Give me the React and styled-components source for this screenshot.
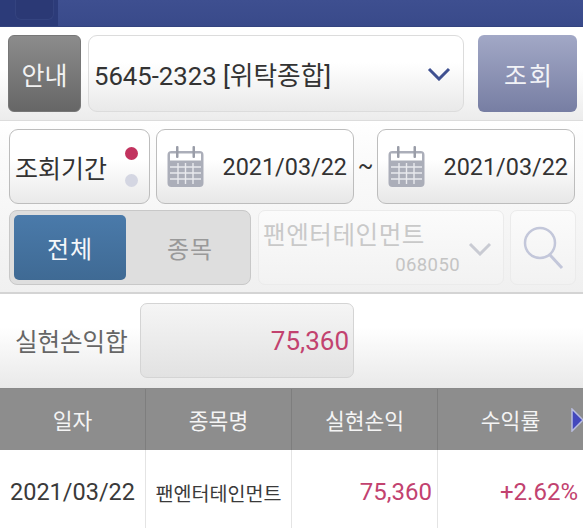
import React from "react";
import styled, { createGlobalStyle } from "styled-components";

const Global = createGlobalStyle`
  html, body { margin: 0; padding: 0; background: #fff; }
  body { font-family: Roboto, "Noto Sans CJK KR", sans-serif; }
  * { box-sizing: border-box; }
`;
const Page = styled.div`
  width: 583px; height: 528px; overflow: hidden; display: flex; flex-direction: column;
  font-family: Roboto, "Noto Sans CJK KR", sans-serif;
`;
const TopBar = styled.div`
  height: 27px; flex: none; display: flex; background: linear-gradient(#3e4f90, #394a8a);
  border-bottom: 1px solid #34447f;
`;
const BackTab = styled.div`
  width: 58px; background: #2c3b79; padding-left: 15px;
`;
const BackShape = styled.div`
  width: 39px; height: 20px; background: #2b3975; border: 1px solid #34437f; border-top: 0;
  border-radius: 0 0 6px 6px;
`;
const AccountRow = styled.div`
  height: 94px; flex: none; display: flex; align-items: flex-start; padding: 8px 6px 0 8px;
  background: linear-gradient(#fff 45%, #ececec);
  border-bottom: 1px solid #dcdcdc;
`;
const GuideButton = styled.div`
  width: 73px; height: 77px; border-radius: 6px; display: flex; align-items: center; justify-content: center;
  color: #f2f2f2; font-size: 25px; background: linear-gradient(#8c8c8c, #666); border: 1px solid #777;
`;
const AccountSelect = styled.div`
  width: 376px; height: 77px; margin-left: 7px; border-radius: 9px; display: flex; align-items: center;
  justify-content: space-between; padding: 0 12px 0 5px; border: 1px solid #dcdcdc;
  background: linear-gradient(#fff 35%, #e9e9e9); color: #333; font-size: 25.7px;
`;
const QueryButton = styled.div`
  width: 99px; height: 77px; margin-left: 14px; border-radius: 6px; display: flex; align-items: center;
  justify-content: center; color: #f2f3f7; font-size: 25px; letter-spacing: 2px; padding-left: 3px;
  background: linear-gradient(#a2a8c6, #777ea3);
`;
const Filters = styled.div`
  height: 173px; flex: none; padding: 8px 7px 0 9px; display: flex; flex-direction: column; gap: 6px;
  background: linear-gradient(#fff, #fbfbfb 20%, #f0f0f0);
  border-bottom: 2px solid #d4d4d4;
`;
const FilterRow = styled.div`
  display: flex; height: ${p => p.$h}px; flex: none;
`;
const PeriodBox = styled.div`
  width: 141px; border-radius: 9px; border: 1px solid #bdbdbd; display: flex; align-items: center;
  justify-content: space-between; padding: 0 11px 0 5px; font-size: 25px; color: #333;
  background: linear-gradient(#fff 40%, #e9e9e9);
`;
const Dots = styled.div`
  display: flex; flex-direction: column; gap: 14px;
`;
const Dot = styled.span`
  width: 13px; height: 13px; border-radius: 50%; background: ${p => p.$c};
`;
const DateBox = styled.div`
  width: 198px; margin-left: ${p => p.$first ? 6 : 0}px; border-radius: 9px; border: 1px solid #bdbdbd;
  display: flex; align-items: center; justify-content: space-between; padding: 0 6px 0 10px;
  font-size: 23.4px; color: #333; background: linear-gradient(#fff 40%, #e7e7e7);
`;
const Tilde = styled.div`
  width: 23px; display: flex; align-items: center; justify-content: center; font-size: 23px; color: #333;
`;
const Toggle = styled.div`
  width: 242px; border-radius: 8px; border: 1px solid #c8c8c8; background: #dedede;
  display: flex; padding: 4px; 
`;
const ToggleActive = styled.div`
  width: 112px; border-radius: 5px; display: flex; align-items: center; justify-content: center;
  color: #f5f7fa; font-size: 24px; letter-spacing: 1px;
  background: linear-gradient(#4a7aaa, #3f6a94);
`;
const ToggleOff = styled.div`
  flex: 1; display: flex; align-items: center; justify-content: center; color: #999; font-size: 24px;
  letter-spacing: 1px; padding-left: 8px;
`;
const StockSelect = styled.div`
  width: 246px; margin-left: 7px; border-radius: 7px; border: 1px solid #ebebeb; position: relative;
  background: linear-gradient(#fbfbfb, #f2f2f2); display: flex; flex-direction: column; padding: 6px 12px 0 4px;
`;
const StockName = styled.div`
  font-size: 24.5px; line-height: 38px; color: #c9c9c9; letter-spacing: .6px; white-space: nowrap;
`;
const StockCode = styled.div`
  font-size: 18.5px; line-height: 21px; color: #c4c4c4; text-align: right; padding-right: 31px; letter-spacing: .4px;
`;
const FadedChevron = styled.svg`
  position: absolute; right: 11px; top: 31px;
`;
const SearchBox = styled.div`
  width: 66px; margin-left: 6px; border-radius: 7px; border: 1px solid #ebebeb;
  background: linear-gradient(#fbfbfb, #f2f2f2); display: flex; align-items: center; justify-content: center;
`;
const SumRow = styled.div`
  height: 95px; flex: none; display: flex; align-items: flex-start; padding: 9px 0 0 15px;
  background: linear-gradient(#fff 35%, #e9e9e9); border-bottom: 1px solid #8a8a8a;
`;
const SumLabel = styled.div`
  width: 125px; height: 75px; display: flex; align-items: center; font-size: 24.5px; color: #666;
`;
const SumValue = styled.div`
  width: 214px; height: 75px; border-radius: 7px; border: 1px solid #d4d4d4; display: flex; align-items: center;
  justify-content: flex-end; padding-right: 4px; font-size: 26px; color: #c2426f;
  background: linear-gradient(#f5f5f5, #e2e2e2);
`;
const Grid = styled.div`
  display: grid; grid-template-columns: 146px 146px 146px 145px; height: ${p => p.$h}px; flex: none;
`;
const HeadCell = styled.div`
  background: #8d8d8d; color: #f4f4f4; font-size: 21.5px; display: flex; align-items: center; justify-content: center;
  border-right: 1px solid #7e7e7e; position: relative; padding-bottom: 1px;
  &:last-child { border-right: 0; }
`;
const Arrow = styled.svg`
  position: absolute; right: 0; top: 19px;
`;
const Cell = styled.div`
  display: flex; align-items: center; justify-content: ${p => p.$align || "center"}; color: ${p => p.$c || "#3a3a3a"};
  font-size: ${p => p.$fs || 23.5}px; padding: 6px ${p => p.$pr || 0}px 0 0; border-right: 1px solid #e4e4e4; background: #fff;
  white-space: nowrap;
  &:last-child { border-right: 0; }
`;

const Calendar = () => (
  <svg width="37" height="41" viewBox="0 0 37 41">
    <rect x="0.5" y="5" width="36" height="36" rx="4" fill="#abaeb9" />
    <rect x="3" y="7.5" width="31" height="7" fill="#fff" />
    <rect x="9" y="0" width="2.5" height="12" rx="1" fill="#9a9da8" />
    <rect x="25.5" y="0" width="2.5" height="12" rx="1" fill="#9a9da8" />
    <g stroke="#e9eaee" strokeWidth="1.4">
      <path d="M3 21h31M3 27h31M3 33h31M11 17v21M18.5 17v21M26 17v21" />
    </g>
  </svg>
);

export default function App() {
  return (
    <Page>
      <Global />
      <TopBar><BackTab><BackShape /></BackTab></TopBar>
      <AccountRow>
        <GuideButton>안내</GuideButton>
        <AccountSelect>
          <span>5645-2323 [위탁종합]</span>
          <svg width="24" height="14" viewBox="0 0 24 14">
            <path d="M2 2l10 10L22 2" fill="none" stroke="#3f5090" strokeWidth="3" />
          </svg>
        </AccountSelect>
        <QueryButton>조회</QueryButton>
      </AccountRow>
      <Filters>
        <FilterRow $h={75}>
          <PeriodBox>
            <span>조회기간</span>
            <Dots><Dot $c="#c2335f" /><Dot $c="#d4d6e2" /></Dots>
          </PeriodBox>
          <DateBox $first><Calendar /><span>2021/03/22</span></DateBox>
          <Tilde>~</Tilde>
          <DateBox><Calendar /><span>2021/03/22</span></DateBox>
        </FilterRow>
        <FilterRow $h={75}>
          <Toggle>
            <ToggleActive>전체</ToggleActive>
            <ToggleOff>종목</ToggleOff>
          </Toggle>
          <StockSelect>
            <StockName>팬엔터테인먼트</StockName>
            <StockCode>068050</StockCode>
            <FadedChevron width="24" height="14" viewBox="0 0 24 14">
              <path d="M2 2l10 10L22 2" fill="none" stroke="#c9cbd3" strokeWidth="3" />
            </FadedChevron>
          </StockSelect>
          <SearchBox>
            <svg width="42" height="46" viewBox="0 0 42 46">
              <circle cx="18" cy="18" r="15" fill="none" stroke="#c3c7da" strokeWidth="2.5" />
              <path d="M28 30l12 13" fill="none" stroke="#c3c7da" strokeWidth="3" />
            </svg>
          </SearchBox>
        </FilterRow>
      </Filters>
      <SumRow>
        <SumLabel>실현손익합</SumLabel>
        <SumValue>75,360</SumValue>
      </SumRow>
      <Grid $h={61}>
        <HeadCell>일자</HeadCell>
        <HeadCell>종목명</HeadCell>
        <HeadCell>실현손익</HeadCell>
        <HeadCell>
          수익률
          <Arrow width="12" height="24" viewBox="0 0 12 24">
            <path d="M1 1l11 11L1 23z" fill="#4348bd" stroke="#b9bde0" strokeWidth="1.5" />
          </Arrow>
        </HeadCell>
      </Grid>
      <Grid $h={78}>
        <Cell>2021/03/22</Cell>
        <Cell $fs={19.6}>팬엔터테인먼트</Cell>
        <Cell $align="flex-end" $pr={5} $c="#c2426f" $fs={24}>75,360</Cell>
        <Cell $align="flex-end" $pr={5} $c="#c2426f" $fs={24}>+2.62%</Cell>
      </Grid>
    </Page>
  );
}
